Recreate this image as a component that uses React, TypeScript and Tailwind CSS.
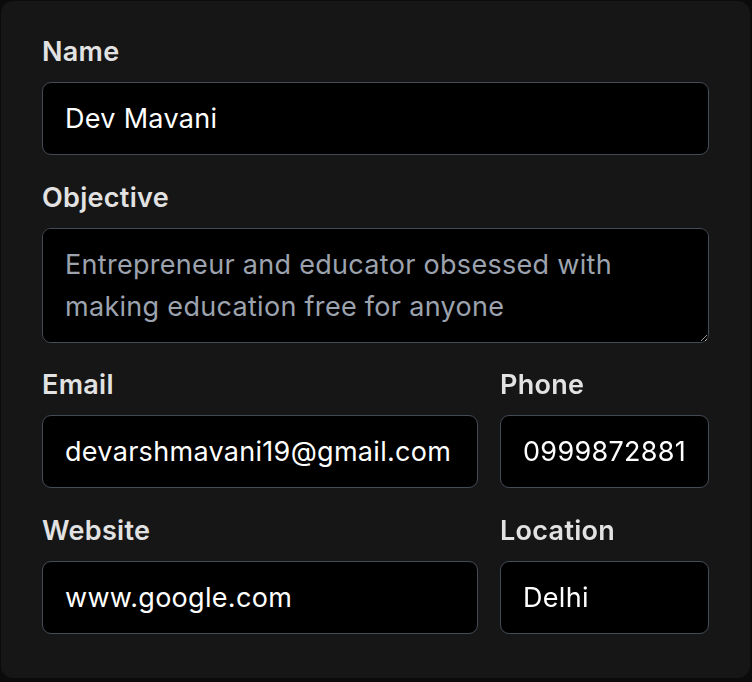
import React from "react";

const labelCls =
  "block text-[27px] leading-[40px] font-semibold tracking-[0.3px] text-[#e2e2e2] mb-[10px]";
const inputCls =
  "w-full h-[73px] bg-black border border-[#454b55] rounded-[9px] px-[22px] text-[27px] tracking-[0.3px] text-white outline-none";

const Field: React.FC<{ label: string; value: string; className?: string }> = ({
  label,
  value,
  className,
}) => (
  <div className={className}>
    <label className={labelCls}>{label}</label>
    <input className={inputCls} defaultValue={value} readOnly />
  </div>
);

export default function App() {
  return (
    <div
      className="w-[752px] h-[682px] bg-[#0b0b0b] pt-px pl-px"
      style={{ fontFamily: "Inter, 'Noto Sans', sans-serif" }}
    >
      <div className="w-[749px] h-[677px] bg-[#161616] rounded-[12px] pt-[31px] px-[41px] flex flex-col gap-[22.5px]">
        <Field label="Name" value="Dev Mavani" />

        {/* Objective */}
        <div>
          <label className={labelCls}>Objective</label>
          <textarea
            className="w-full h-[115px] block bg-black border border-[#454b55] rounded-[9px] px-[22px] py-[15px] text-[27px] leading-[42px] tracking-[0.3px] text-white placeholder:text-[#9ca3af] outline-none"
            placeholder="Entrepreneur and educator obsessed with making education free for anyone"
          />
        </div>

        <div className="flex gap-[22px]">
          <Field className="w-[436px]" label="Email" value="devarshmavani19@gmail.com" />
          <Field className="flex-1 min-w-0" label="Phone" value="09998728812" />
        </div>

        <div className="flex gap-[22px]">
          <Field className="w-[436px]" label="Website" value="www.google.com" />
          <Field className="flex-1 min-w-0" label="Location" value="Delhi" />
        </div>
      </div>
    </div>
  );
}
